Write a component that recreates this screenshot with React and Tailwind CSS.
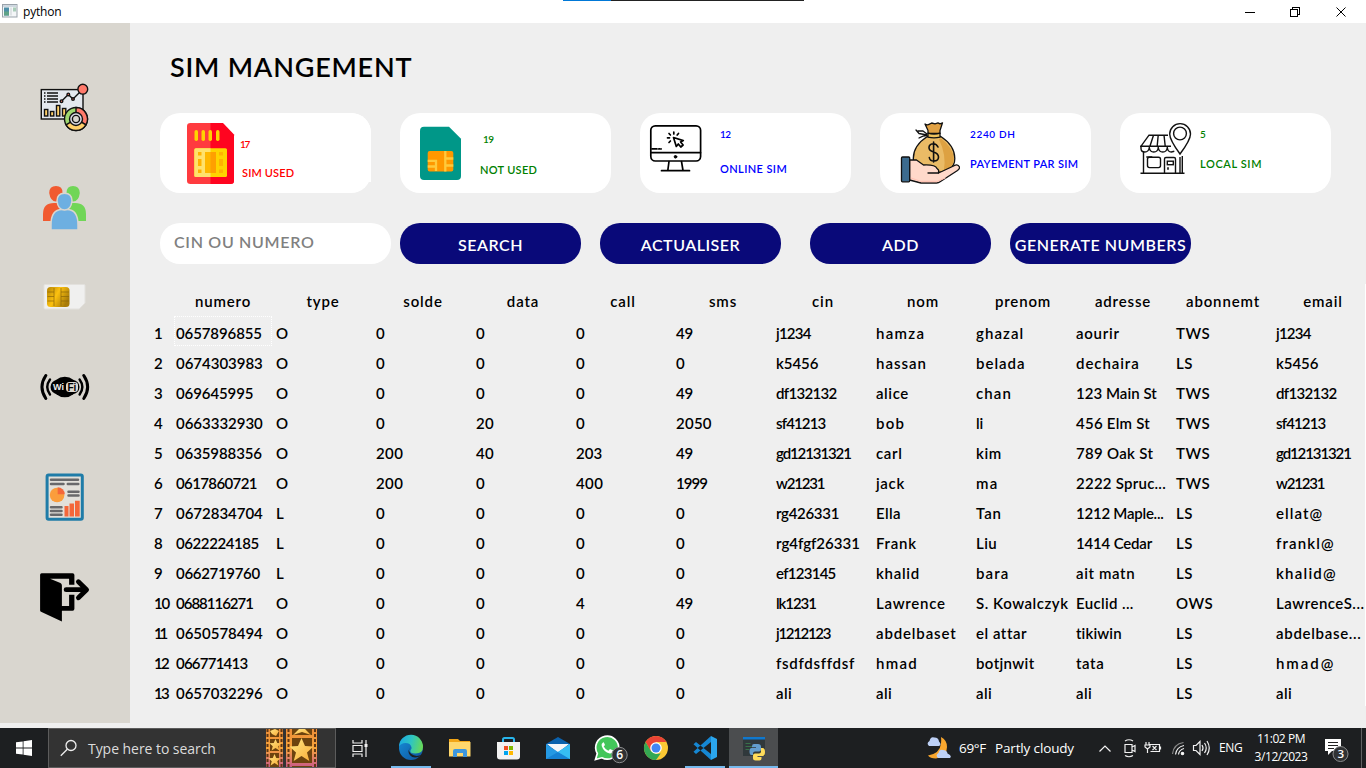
const headers = ["numero", "type", "solde", "data", "call", "sms", "cin", "nom", "prenom", "adresse", "abonnemt", "email"];

const rows = [
  ["0657896855", "O", "0", "0", "0", "49", "j1234", "hamza", "ghazal", "aourir", "TWS", "j1234"],
  ["0674303983", "O", "0", "0", "0", "0", "k5456", "hassan", "belada", "dechaira", "LS", "k5456"],
  ["069645995", "O", "0", "0", "0", "49", "df132132", "alice", "chan", "123 Main St", "TWS", "df132132"],
  ["0663332930", "O", "0", "20", "0", "2050", "sf41213", "bob", "li", "456 Elm St", "TWS", "sf41213"],
  ["0635988356", "O", "200", "40", "203", "49", "gd12131321", "carl", "kim", "789 Oak St", "TWS", "gd12131321"],
  ["0617860721", "O", "200", "0", "400", "1999", "w21231", "jack", "ma", "2222 Spruc...", "TWS", "w21231"],
  ["0672834704", "L", "0", "0", "0", "0", "rg426331", "Ella", "Tan", "1212 Maple...", "LS", "ellat@"],
  ["0622224185", "L", "0", "0", "0", "0", "rg4fgf26331", "Frank", "Liu", "1414 Cedar", "LS", "frankl@"],
  ["0662719760", "L", "0", "0", "0", "0", "ef123145", "khalid", "bara", "ait matn", "LS", "khalid@"],
  ["0688116271", "O", "0", "0", "4", "49", "lk1231", "Lawrence", "S. Kowalczyk", "Euclid ...", "OWS", "LawrenceS..."],
  ["0650578494", "O", "0", "0", "0", "0", "j1212123", "abdelbaset", "el attar", "tikiwin", "LS", "abdelbase..."],
  ["066771413", "O", "0", "0", "0", "0", "fsdfdsffdsf", "hmad", "botjnwit", "tata", "LS", "hmad@"],
  ["0657032296", "O", "0", "0", "0", "0", "ali", "ali", "ali", "ali", "LS", "ali"],
];

function spacing(text) {
  let sum = 0;
  for (const c of text) {
    if (c === "1") sum -= 3.2;
    else if (c === "0") sum += 0.7;
    else if (/[2-9]/.test(c)) sum -= 0.2;
    else if (/[abdghmoz]/.test(c)) sum += 1.3;
    else if (/[encpqu]/.test(c)) sum += 0.9;
    else if (/[skrfA-Z ]/.test(c)) sum += 0.5;
    else if (c === "@") sum += 4.5;
    else sum -= 0.1;
  }
  return sum / text.length;
}

function TitleBar() {
  return (
    <header className="relative flex h-[23px] shrink-0 items-center bg-white">
      <div className="absolute left-[563px] top-0 flex h-px w-[241px] bg-[#222]">
        <div className="h-px w-12 bg-[#0078d7]" />
      </div>
      <svg className="ml-[2px] mb-px h-[14px] w-[16px]" viewBox="0 0 16 14">
        <rect x="0.5" y="0.5" width="14.500" height="12.500" fill="#f4f6f8" stroke="#9aa3ab" />
        <rect x="1" y="1" width="13.500" height="2" fill="#cfd8e0" />
        <rect x="2" y="3.500" width="5" height="8" fill="#4d8fa8" />
        <rect x="2" y="7.500" width="5" height="4" fill="#5fa287" />
        <rect x="8" y="3.500" width="2" height="8" fill="#dfe3e6" />
        <rect x="11" y="3.500" width="3" height="4" fill="#a9cdb9" />
      </svg>
      <span className="ml-[5px] text-[12px] leading-none tracking-[-0.2px] text-black [font-family:'Open_Sans',sans-serif]">python</span>
      <svg className="ml-auto mr-[18px] h-[12px] w-[104px]" viewBox="1244 4 104 12" fill="none" stroke="#000" shapeRendering="crispEdges">
        <path d="M1245 10.500h10" />
        <path d="M1290.500 7.500h7v7h-7zM1292.500 7v-1.500h7v7h-2" />
        <path d="M1336.500 5.500l9 9M1345.500 5.500l-9 9" shapeRendering="auto" />
      </svg>
    </header>
  );
}

function DashboardIcon() {
  return (
    <svg className="h-[50px] w-[50px]" viewBox="40 83 50 50" fill="none" stroke="#111" strokeWidth="1.400">
      <rect x="41.300" y="89.600" width="41.700" height="29.400" fill="#e4e8ee" />
      <path d="M44 93h1.500M44 96h1.500M44 99h1.500M44 102h1.500M47 93h11M47 96h11M47 99h11M47 102h11" />
      <path d="M61.500 101.200l6.800-6.800 4.700 4.700 9-9" />
      <g fill="#ff7a6b"><circle cx="61.500" cy="101.200" r="1.300" /><circle cx="68.300" cy="94.400" r="1.300" /><circle cx="73" cy="99" r="1.300" /><circle cx="82.800" cy="89.200" r="4.900" /></g>
      <g fill="#ffd06a"><rect x="44.500" y="109.500" width="3.300" height="6.500" /><rect x="50.500" y="111.500" width="3.300" height="4.500" /><rect x="56.500" y="105.500" width="3.300" height="10.500" /><rect x="62.500" y="108.500" width="3.300" height="7.500" /></g>
      <circle cx="76" cy="119" r="11.500" fill="#9fd870" />
      <path d="M76 107.500a11.500 11.500 0 0 1 9.900 17.300L76 119z" fill="#ff7a6b" />
      <path d="M85.900 124.800a11.500 11.500 0 0 1-19.800 0L76 119z" fill="#ffd06a" />
      <circle cx="76" cy="119" r="6.500" fill="#dcdde8" />
      <circle cx="76" cy="119" r="3.600" fill="#d9d6cf" />
    </svg>
  );
}

function PeopleIcon() {
  return (
    <svg className="h-[44px] w-[44px]" viewBox="43 186 44 44">
      <path d="M49.200 193q0-7 6.800-7t6.500 7q-1 8.500-6.500 8.500t-6.800-8.500zM43 221v-7q0-11 11-11h9v18z" fill="#f15a30" />
      <path d="M66.500 193q0-7 6.500-7t6.800 7q-1 8.500-6.800 8.500t-6.500-8.500zM66 221v-18h9q11 0 11 11v7z" fill="#70d657" />
      <g fill="#6dafe1" stroke="#d9d6cf" strokeWidth="1.500">
        <path d="M51 230v-5q0-15.500 11-15.500h5q11 0 11 15.500v5z" />
        <path d="M57 201q0-7.800 7.500-7.800t7.500 7.800q-1 9-7.500 9t-7.500-9z" />
      </g>
    </svg>
  );
}

function SimIcon() {
  return (
    <svg className="h-[27px] w-[44px]" viewBox="42.500 283 44 27">
      <defs>
        <linearGradient id="gold" x1="0" x2="1" y1="0" y2="0.500">
          <stop offset="0" stopColor="#b38305" /><stop offset="0.500" stopColor="#fcc110" /><stop offset="1" stopColor="#a97c08" />
        </linearGradient>
      </defs>
      <path d="M44.500 284.500h39q1 0 1 1V303l-5.800 6H44.500q-1 0-1-1v-22.500q0-1 1-1z" fill="#f0f0ef" stroke="#e3e1dd" />
      <rect x="46.500" y="287" width="22.500" height="20" rx="3.500" fill="url(#gold)" />
      <path d="M53.500 288v18M60.500 288v18M47 292h6.500M47 296.500h6.500M47 301h6.500M60.500 292h8M60.500 296.500h8M60.500 301h8" stroke="#896509" strokeWidth="0.700" />
    </svg>
  );
}

function WifiBadgeIcon() {
  return (
    <svg className="h-[28px] w-[50px]" viewBox="39.500 373 50 28" fill="none" stroke="#000">
      <ellipse cx="64.300" cy="387" rx="12" ry="10.300" fill="#000" stroke="none" />
      <rect x="50" y="380" width="29" height="14" rx="7" fill="#000" stroke="none" />
      <rect x="65.500" y="382" width="12" height="10" rx="3.500" fill="#ddd9d2" stroke="none" />
      <g strokeWidth="3" strokeLinecap="round">
        <path d="M45.300 375.500q-7.700 11.500 0 23M83.300 375.500q7.700 11.500 0 23" />
        <path d="M49.500 379.500q-5.500 7.500 0 15M79.100 379.500q5.500 7.500 0 15" strokeWidth="2.400" />
      </g>
      <text x="52.500" y="390.300" fontSize="9" fontWeight="700" fill="#eee" stroke="none" fontFamily="Liberation Sans">Wi</text>
      <text x="67" y="390.500" fontSize="10" fontWeight="700" fill="#000" stroke="none" fontFamily="Liberation Sans">Fi</text>
    </svg>
  );
}

function ReportIcon() {
  return (
    <svg className="h-[48px] w-[40px]" viewBox="44.500 473.500 40 48" fill="none">
      <rect x="46.600" y="475.400" width="35.200" height="44.300" rx="1.500" fill="#e2e0da" stroke="#1f7ca8" strokeWidth="3" />
      <path d="M50.500 480.300h27M50.500 484.400h12.500M67.300 484.400h10.500M68 492.300h10M68 496h10M50.500 507.800h10.500M50.500 511.500h10.500M50.500 515.300h10.500" stroke="#69696b" strokeWidth="2.500" strokeLinecap="round" />
      <circle cx="56.600" cy="495.500" r="7.300" fill="#fb9d3c" />
      <path d="M57.200 494.700v-7a7 7 0 0 1 7 7z" fill="#f4673a" />
      <path d="M64 506.500h4v10.500h-4zM69 504h4.500v13H69zM74.500 501.300h4.700V517h-4.700z" fill="#f4673a" />
    </svg>
  );
}

function ExitIcon() {
  return (
    <svg className="h-[50px] w-[50px]" viewBox="39.900 572.300 50 50">
      <path d="M41.500 573.500h31q1.800 0 1.800 1.800V585H69v-6H50l10.300 4.300q1.500.8 1.500 2.500v20.400H69V595h5.300v14q0 2-1.800 2H61.800v10.700L40.900 612q-.9-.5-.9-1.500V575q0-1.500 1.500-1.500z" />
      <path d="M66 590h20M78.300 582l8.200 8-8.200 8" fill="none" stroke="#000" strokeWidth="4.800" strokeLinecap="round" strokeLinejoin="round" />
    </svg>
  );
}

function Sidebar() {
  return (
    <nav className="flex h-[700px] w-[130px] shrink-0 flex-col items-center bg-[#d9d6cf] pt-[60px]">
      <DashboardIcon />
      <div className="mt-[53px]"><PeopleIcon /></div>
      <div className="mt-[53px]"><SimIcon /></div>
      <div className="mt-[63px]"><WifiBadgeIcon /></div>
      <div className="mt-[72px]"><ReportIcon /></div>
      <div className="mt-[51px]"><ExitIcon /></div>
    </nav>
  );
}

function RedSim() {
  return (
    <svg className="h-[62px] w-[48px]" viewBox="187 123 48 62">
      <path d="M190.500 123H222l12 12.500V181q0 3-3.500 3h-40q-3.500 0-3.500-3v-55q0-3 3.500-3z" fill="#ff3b3f" />
      <path d="M210.500 123H223l11 11.500V181q0 3-3.500 3h-20z" fill="#ff0420" />
      <g fill="#ffd300"><rect x="194.500" y="130" width="3.500" height="11" rx="1.700" /><rect x="201.500" y="130" width="3.500" height="11" rx="1.700" /><rect x="208.500" y="130" width="3.500" height="11" rx="1.700" /><rect x="216" y="130" width="3.500" height="11" rx="1.700" /></g>
      <rect x="194.300" y="148.300" width="32.700" height="28.700" rx="1.500" fill="#ffd300" />
      <path d="M196 148.300h14.500V177H196q-1.700 0-1.700-1.500V150q0-1.700 1.700-1.700z" fill="#ffe26c" />
      <rect x="205" y="152" width="11" height="21" fill="#ffa000" />
      <rect x="205" y="152" width="5.500" height="21" fill="#ffb800" />
      <path d="M198 152h3.500v3.500H198zM198 159h3.500v7H198zM198 169.500h3.500v3.500H198zM219 152h4v3.500h-4zM219 159h4v7h-4zM219 169.500h4v3.500h-4z" fill="#ffb300" />
    </svg>
  );
}

function GreenSim() {
  return (
    <svg className="h-[55px] w-[42px]" viewBox="420 126 42 55">
      <path d="M424 126.700h25l12 12V176q0 4-4 4h-33q-4 0-4-4v-45.300q0-4 4-4z" fill="#009788" />
      <rect x="427.700" y="151" width="25.600" height="20.400" rx="2" fill="#ff9800" />
      <path d="M427.700 160.800h8.300V171M427.700 166.500h8M445.300 151v20.400M446 158.500h7.300M446 165.500h7.300" fill="none" stroke="#ffca3c" strokeWidth="2.300" />
    </svg>
  );
}

function Monitor() {
  return (
    <svg className="h-[49px] w-[53px]" viewBox="649 124 53 49" fill="none" stroke="#000" strokeWidth="1.700" strokeLinecap="round">
      <rect x="650.800" y="125.800" width="49.800" height="35.200" rx="4.500" />
      <path d="M651 152.700h49.500M652 148.900h5M661 148.900h.1M669 161.500l-1.200 9M681.500 161.500l1.500 9M661.500 170.700h28" />
      <path d="M658.800 148.900h1" />
      <circle cx="675.500" cy="156.800" r="1.300" fill="#000" strokeWidth="1" />
      <path d="M673.500 137.500l2.800 9 2-2.500 2.500 3 2.300-2-2.500-3 2.700-1.400zM673.800 132v2M678.500 133.500l-1.300 1.500M669 133.500l1.400 1.500M667.500 137.800h2M669 142.500l1.400-1.500" strokeLinejoin="round" />
    </svg>
  );
}

function MoneyBag() {
  return (
    <svg className="h-[63px] w-[61px]" viewBox="900 122.500 61 63" stroke="#111" strokeWidth="1.300" strokeLinejoin="round" strokeLinecap="round">
      <path d="M927.300 137q-14 9-14 22 0 14 21 14 20.500 0 20.500-14 0-13-14-22z" fill="#eabb66" />
      <path d="M941 139q12 9 12.800 20 0 10-10 12.500 3-16-5-32z" fill="#dda142" stroke="none" />
      <path d="M925 124.500q2 1.500 4.500.2l2.200-1.200 3.300.8 3-1 2 1 2.500-1-2.500 7.700v3h-12v-3z" fill="#e1a143" />
      <path d="M928 133.700q6 2 12 0v4q-6 1.500-12 0z" fill="#efc25c" />
      <path d="M927 135.500l-8-1.500-3-3.500M927 134.500l-4-3h-5M927 136q-4 0-8 2.500" fill="none" />
      <path d="M909.500 160.500h7l7 5q12-.5 13.500 3.500 2.500 1.500 1.500 4.500l14-6.500q5-3.500 7 .5.500 1.500-2 3.500l-17 11q-2 1.500-4 1.500H921l-11.500-3z" fill="#ffd9ca" />
      <path d="M911 178.500l10 3.500h16l8-3.500" fill="none" stroke="#ffc4b5" />
      <path d="M928 173.500h10.500" fill="none" />
      <rect x="901.500" y="157.500" width="8.200" height="24.800" rx="1" fill="#3c6b8e" />
      <path d="M938 147.500q-1.500-3.500-5-3.300-4 .3-4 4 0 2.800 4.500 4.300 5 1.600 5 5 0 4-4.700 4-4 0-4.500-3.500M933.600 142.500v20" fill="none" strokeWidth="1.600" />
    </svg>
  );
}

function Shop() {
  return (
    <svg className="h-[53px] w-[52px]" viewBox="1140 122 52 53" fill="none" stroke="#111" strokeWidth="1.400">
      <path d="M1140.500 173.300h44M1143.500 152v21M1146.300 157h6M1180 157v16M1182.300 156v17" />
      <path d="M1168 135.200h-19l-8 11h30M1153.500 135.200l-3.500 10.800M1158.200 135.200l-1 10.800M1164 135.200l1.200 10.800" />
      <path d="M1141 145.500v3q0 3.500 3.800 3.500t4.500-4.500q.5 4.500 4.500 4.500t4.500-4.500q.5 4.500 4.500 4.500t4.500-4.500q.5 4.500 4 4.500l3-.7M1149.300 146v3M1158.200 146v3M1167.300 146v3" />
      <rect x="1147.500" y="157.300" width="13" height="10.300" rx="2" />
      <path d="M1164.500 173v-14q0-1.500 1.500-1.500h8q1.500 0 1.500 1.500v14" />
      <rect x="1167.300" y="161.200" width="6" height="3.500" />
      <path d="M1168 167.300v2.500" strokeWidth="1.600" />
      <path d="M1180 154q-10.300-14-10.300-20a10.400 10.400 0 0 1 20.800 0q0 6-10.500 20z" fill="#fff" />
      <circle cx="1180" cy="133.500" r="6.400" />
    </svg>
  );
}

function Card({ children }) {
  return <section className="flex h-20 w-[211px] rounded-[20px] bg-white text-[11px] font-semibold leading-[12px] whitespace-nowrap">{children}</section>;
}

function Cards() {
  return (
    <div className="ml-[30px] mt-[32px] flex gap-[29px]">
      <Card>
        <div className="ml-[27px] mt-[10px]"><RedSim /></div>
        <div className="ml-[5px] pt-[25px] text-[#ff0000]">
          <p className="text-[10px] tracking-[-1.4px]">17</p>
          <p className="ml-[2px] mt-[17px] tracking-[0.15px]">SIM USED</p>
        </div>
        <div className="ml-auto h-[69px] w-5 self-start rounded-tr-[20px] bg-white" />
      </Card>
      <Card>
        <div className="ml-[20px] mt-[13px]"><GreenSim /></div>
        <div className="ml-[18px] pt-[20px] text-[#008000]">
          <p className="ml-[3px] text-[10px] tracking-[-0.5px]">19</p>
          <p className="mt-[19px] tracking-[0.3px]">NOT USED</p>
        </div>
      </Card>
      <Card>
        <div className="ml-[9px] mt-[11px]"><Monitor /></div>
        <div className="ml-[18px] pt-[15px] text-[#0000ff]">
          <p className="text-[10px] tracking-[-0.5px]">12</p>
          <p className="mt-[23px] tracking-[0.4px]">ONLINE SIM</p>
        </div>
      </Card>
      <Card>
        <div className="ml-[20px] mt-[9px]"><MoneyBag /></div>
        <div className="ml-[9px] pt-[15px] text-[#0000ff]">
          <p className="text-[10px] tracking-[0.65px]">2240 DH</p>
          <p className="mt-[18px] tracking-[0.32px]">PAYEMENT PAR SIM</p>
        </div>
      </Card>
      <Card>
        <div className="ml-[20px] mt-[9px]"><Shop /></div>
        <div className="ml-[8px] pt-[15px] text-[#008000]">
          <p className="text-[10px]">5</p>
          <p className="mt-[18px] tracking-[0.6px]">LOCAL SIM</p>
        </div>
      </Card>
    </div>
  );
}

function Action({ children, wide }) {
  return (
    <button className={`flex h-[41px] w-[181px] shrink-0 items-center justify-center rounded-[20px] bg-[#090979] pt-[2px] text-[16px] font-semibold leading-none whitespace-nowrap text-white ${wide ? "tracking-[0.55px]" : "tracking-[0.5px]"}`}>
      {children}
    </button>
  );
}

function Toolbar() {
  return (
    <div className="ml-[30px] mt-[30px] flex">
      <div className="mr-[9px] flex h-[41px] w-[231px] items-center rounded-[20px] bg-white pl-[14px] pb-[4px] text-[16px] font-semibold tracking-[0.7px] text-[#808080]">CIN OU NUMERO</div>
      <Action>SEARCH</Action>
      <div className="ml-[19px]"><Action>ACTUALISER</Action></div>
      <div className="ml-[29px]"><Action>ADD</Action></div>
      <div className="ml-[19px]"><Action wide>GENERATE NUMBERS</Action></div>
    </div>
  );
}

function DataTable() {
  return (
    <div className="relative ml-[23px] mt-[20px] w-[1213px] overflow-hidden text-[15px] font-semibold whitespace-nowrap text-black">
      <div className="grid h-[32px] grid-cols-[20px_repeat(12,100px)] items-center pt-[2px] text-center tracking-[0.85px]">
        <span />
        {headers.map((h) => <span key={h}>{h}</span>)}
      </div>
      {rows.map((row, i) => (
        <div key={row[0]} className="grid h-[30px] grid-cols-[20px_repeat(12,100px)]">
          <span className="flex items-center pl-px pt-[5px]" style={{ letterSpacing: spacing(String(i + 1)) }}>{i + 1}</span>
          {row.map((cell, j) => (
            <span
              key={j}
              className={`flex items-center pt-[5px] ${i === 0 && j === 0 ? "ml-px w-[98px] border border-dotted border-white pl-px" : "pl-[3px]"}`}
              style={{ letterSpacing: spacing(cell) }}
            >
              {cell}
            </span>
          ))}
        </div>
      ))}
      <div className="absolute right-0 top-0 h-full w-px bg-white" />
    </div>
  );
}

function Cell({ x, on, active, children }) {
  return (
    <div className={`relative h-10 w-[49px] shrink-0 ${active ? "bg-[#4b4d4f]" : ""}`}>
      <svg className="h-10 w-[49px]" viewBox={`${x} 728 49 40`} fill="none">{children}</svg>
      {on && <div className={`absolute bottom-0 h-[2px] bg-[#76b9ed] ${active ? "left-0 w-[49px]" : "left-[5px] w-10"}`} />}
    </div>
  );
}

const STAR = "M0-12L3.500-4 12-3.400 5.500 2.400 7.800 11 0 6-7.800 11-5.500 2.400-12-3.400-3.500-4z";

function FilmStrips() {
  return (
    <svg className="h-[38px] w-[52px] shrink-0" viewBox="266 729 52 38">
      <defs>
        <linearGradient id="film" x1="0" x2="0" y1="0" y2="1"><stop offset="0" stopColor="#ec8d38" /><stop offset="0.500" stopColor="#f7a43a" /><stop offset="1" stopColor="#c6568c" /></linearGradient>
        <linearGradient id="star" x1="0" x2="1" y1="0" y2="1"><stop offset="0" stopColor="#ffe985" /><stop offset="1" stopColor="#f9aa35" /></linearGradient>
      </defs>
      <path d="M266 729h17v39h-17zM286 729h31v39h-31z" fill="url(#film)" />
      <path d="M270 729h9v8h-9zM270 739h9v12h-9zM270 753h9v15h-9zM292 729h20v6h-20zM292 738h20v25h-20zM292 766h20v2h-20z" fill="#6d430e" />
      <path d="M267.500 729v39M281.500 729v39M288.500 729v39M315 729v39" stroke="#603712" strokeWidth="2" strokeDasharray="3 2" />
      <g fill="url(#star)">
        <path d={STAR} transform="translate(301.500 750)" />
        <path d="M293 735l6-6h6l6 6-9-3z" />
        <path d={STAR} transform="translate(275.500 745) scale(.5)" />
        <path d={STAR} transform="translate(274.500 760) scale(.5)" />
        <path d="M270 731l5-2 4 2-3 5-4-2z" />
      </g>
    </svg>
  );
}

function Taskbar() {
  return (
    <footer className="flex h-10 shrink-0 items-stretch bg-[#1d1f21] text-white [font-family:'Open_Sans','Noto_Sans',sans-serif]">
      <div className="flex w-12 shrink-0 items-center justify-center">
        <svg className="h-4 w-4" viewBox="0 0 16 16" fill="#fff"><path d="M0 2.300l6.700-.9v6.200H0zM7.500 1.200L16 0v7.600H7.500zM0 8.400h6.700v6.200L0 13.700zM7.500 8.400H16V16l-8.500-1.200z" /></svg>
      </div>
      <div className="flex w-[288px] shrink-0 items-center overflow-hidden border border-[#5c5c5c] bg-[#333] pl-[11px]">
        <svg className="h-[18px] w-[18px]" viewBox="0 0 18 18" fill="none" stroke="#eee" strokeWidth="1.300"><circle cx="11" cy="6.500" r="5" /><path d="M7.300 10.200L.8 16.700" /></svg>
        <span className="ml-[10px] w-[178px] text-[14px] tracking-[-0.05px] text-[#dcdcdc]">Type here to search</span>
        <FilmStrips />
      </div>
      <Cell x={336.5}>
        <path d="M353.500 740v3h9v-3M353.500 757v-3h9v3M353.500 745.500h9v6h-9zM366.500 740v17" stroke="#eee" strokeWidth="1.200" />
        <path d="M365 744h3v3h-3z" fill="#eee" />
      </Cell>
      <div className="ml-px flex">
        <Cell x={386} on>
          <defs>
            <linearGradient id="edgeTop" x1="0" x2="1" y1="0.300" y2="0.500"><stop offset="0" stopColor="#1ba9e3" /><stop offset="0.500" stopColor="#2fc5c1" /><stop offset="1" stopColor="#68d957" /></linearGradient>
            <linearGradient id="edgeBottom" x1="0" x2="1" y1="0" y2="1"><stop offset="0" stopColor="#168fd9" /><stop offset="1" stopColor="#0f519c" /></linearGradient>
          </defs>
          <circle cx="411" cy="748" r="12" fill="url(#edgeBottom)" />
          <path d="M399 746.500a12 12 0 0 1 24 .5q0 6.500-7.500 6.500-6 0-5-3.200 1.500-1.300 1-3-1-4.300-6-4.300-4.500 0-6.500 3.500z" fill="url(#edgeTop)" />
          <path d="M411 747q-4 3 0 6.800 4.500 3.700 11 1l-3 2q-6 2-9-1.500-3.500-4.500 1-8.300z" fill="#1d1f21" />
        </Cell>
        <Cell x={435}>
          <path d="M449 739h9l2 2h10v15h-21z" fill="#f2a516" />
          <path d="M449 742h21.500v14.500H449z" fill="#ffd76c" />
          <path d="M453 757v-6q0-2 2-2h10q2 0 2 2v6h-4v-4h-6v4z" fill="#3c96dd" />
        </Cell>
        <Cell x={484}>
          <path d="M503 742.500v-3q0-1.500 1.500-1.500h8q1.500 0 1.500 1.500v3" stroke="#28b5ec" strokeWidth="2" />
          <path d="M497 742h23v14.500q0 3-3 3h-17q-3 0-3-3z" fill="#f2f2f2" />
          <path d="M504 746h4v4h-4z" fill="#f25022" /><path d="M509 746h4v4h-4z" fill="#7fba00" /><path d="M504 751h4v4h-4z" fill="#00a4ef" /><path d="M509 751h4v4h-4z" fill="#ffb900" />
        </Cell>
        <Cell x={533}>
          <path d="M546 744l12-7 12 7v4h-24z" fill="#0b62ad" />
          <path d="M547 744h22l-11 9z" fill="#f5f7f9" />
          <path d="M546 744l12 8 12-8v15h-24z" fill="#2599e3" />
          <path d="M546 759l12-7 12 7z" fill="#1682d4" />
          <path d="M558 752l12-8v15z" fill="#36bdf3" />
        </Cell>
        <Cell x={582}>
          <path d="M595.500 759.500l1.800-6a11.500 11.500 0 1 1 4.500 4.300z" fill="#43c65a" stroke="#fff" strokeWidth="1.700" />
          <path d="M603 742.500q-2 1-1.300 3.500 2 6 8 7.500 3 .3 3.500-3l-3.200-1.600-1.600 1.800q-3.200-1.300-4.700-4.200l1.300-1.500-1.200-2.700z" fill="#fff" />
          <circle cx="619.500" cy="755" r="7.700" fill="#303234" stroke="#8b8c8d" />
          <text x="616.200" y="759.300" fill="#fff" fontSize="12" fontWeight="600">6</text>
        </Cell>
        <Cell x={631}>
          <circle cx="656" cy="748" r="12" fill="#fcc934" />
          <path d="M656 748v-6h10.400A12 12 0 0 0 645.600 742l5 9z" fill="#ea4335" />
          <path d="M645.600 742l5.200 9 5.200 3 4.700-.5-4.700 6.500A12 12 0 0 1 645.600 742z" fill="#34a853" />
          <circle cx="656" cy="748" r="5.800" fill="#fff" /><circle cx="656" cy="748" r="4.500" fill="#4285f4" />
        </Cell>
        <Cell x={680} on>
          <path d="M711 736l6 3v18l-6 3z" fill="#2ba6ee" />
          <path d="M711 742l-15 12-2.500-2.300L711 736zM711 754l-15-12-2.500 2.300L711 760z" fill="#1687d3" />
        </Cell>
        <Cell x={729.5} on active>
          <path d="M743.500 738h22v18h-22z" fill="#30383b" /><path d="M743.500 737h22v2.500h-22z" fill="#1078ce" />
          <path d="M746 743.500h5M746 746.500h7M746 749.500h4" stroke="#39714a" />
          <path d="M754.500 744h4q3 0 3 3v2.500q0 2-2 2h-4q-2 0-2 2v1.500h-1.500q-2 0-2-3.500t2-3.500h4.500v-.8h-4v-1q0-2.200 2-2.200z" fill="#639dcd" />
          <path d="M760 760.500h-4q-2.500 0-2.500-2v-3q0-2 2-2h4q2 0 2-2V748h1.500q2.500 0 2.500 4t-2.500 4H758v1h4v1.500q0 2-2 2z" fill="#ffdc5b" />
        </Cell>
      </div>
      <div className="ml-auto flex w-[441px] items-center">
        <svg className="h-6 w-[27px] shrink-0" viewBox="925 736 27 24">
          <path d="M941 737q6 3 6 10 0 10-11 11.500-6 0-8-3 12-2 13-12 .5-3 0-6.500z" fill="#f8a62e" />
          <path d="M929 746q-3-3 .5-5 1-5 5-3.500 4 0 4.500 4 3 3 0 4.500zM938 758q-3-3 .5-5 1-4 4.500-3 4 0 4.500 3.500 5 2 2.500 4.500z" fill="#bdd0f5" />
        </svg>
        <span className="ml-[7px] w-[36px] text-[13.500px] tracking-[-0.300px]">69°F</span>
        <span className="w-[102px] whitespace-nowrap text-[13.500px] tracking-[-0.150px]">Partly cloudy</span>
        <svg className="h-5 w-[116px] shrink-0" viewBox="1097 738 116 20" fill="none" stroke="#f1f1f1" strokeWidth="1.200">
          <path d="M1099.500 751.500l5.500-5.500 5.500 5.500M1125 744.500h7v8h-7zM1132 747l3-1.500v6l-3-1.500M1125 741q4-2.500 8 0M1125 755.500q4 2.500 8 0" />
          <path d="M1149.500 744.500h10v7h-9M1160.500 746.500v3M1146 742v3M1149 742v3M1145 745h5v2l-2.500 2-2.500-2zM1147.500 749v4M1152.500 746l4 4M1156.500 746l-4 4" />
          <path d="M1172.500 754q1-10 11-11.500" stroke="#898989" /><path d="M1175.500 754.500q1-7.500 8.500-9M1178.500 754.500q.5-4.500 5.500-6" /><circle cx="1182.500" cy="753.500" r="1.200" fill="#fff" />
          <path d="M1193.500 745.500h2.500l4-4v13l-4-4h-2.500zM1202 745q2 3 0 6M1204.500 743q3.500 5 0 10M1207 741q4.500 7 0 14" />
        </svg>
        <span className="ml-[6px] w-[28px] text-[12px] tracking-[-0.300px]">ENG</span>
        <div className="w-[68px] whitespace-nowrap text-center text-[12px] leading-[18px] tracking-[-0.450px]"><p>11:02 PM</p><p>3/12/2023</p></div>
        <svg className="ml-[9px] h-7 w-[26px] shrink-0" viewBox="1324 735 26 28">
          <path d="M1325 740h16v12h-9l-4 4v-4h-3z" fill="#fff" /><path d="M1328 743.500h10M1328 746.500h10M1328 749.500h6" stroke="#222" />
          <circle cx="1340.500" cy="755" r="7.500" fill="#303234" stroke="#8b8c8d" />
          <text x="1337.400" y="759.300" fill="#fff" fontSize="11.500" fontWeight="600">3</text>
        </svg>
        <div className="ml-auto mr-[4px] h-10 w-px bg-[#606162]" />
      </div>
    </footer>
  );
}

export default function App() {
  return (
    <div className="flex h-[768px] w-[1366px] flex-col overflow-hidden bg-[#efefef] [font-family:Lato,sans-serif]">
      <TitleBar />
      <div className="flex h-[705px] shrink-0">
        <Sidebar />
        <main className="w-[1236px] overflow-hidden">
          <h1 className="ml-10 mt-[27px] h-[31px] text-[27px] font-semibold leading-[33px] tracking-[0.8px] whitespace-nowrap text-black">SIM MANGEMENT</h1>
          <Cards />
          <Toolbar />
          <DataTable />
        </main>
      </div>
      <Taskbar />
    </div>
  );
}
